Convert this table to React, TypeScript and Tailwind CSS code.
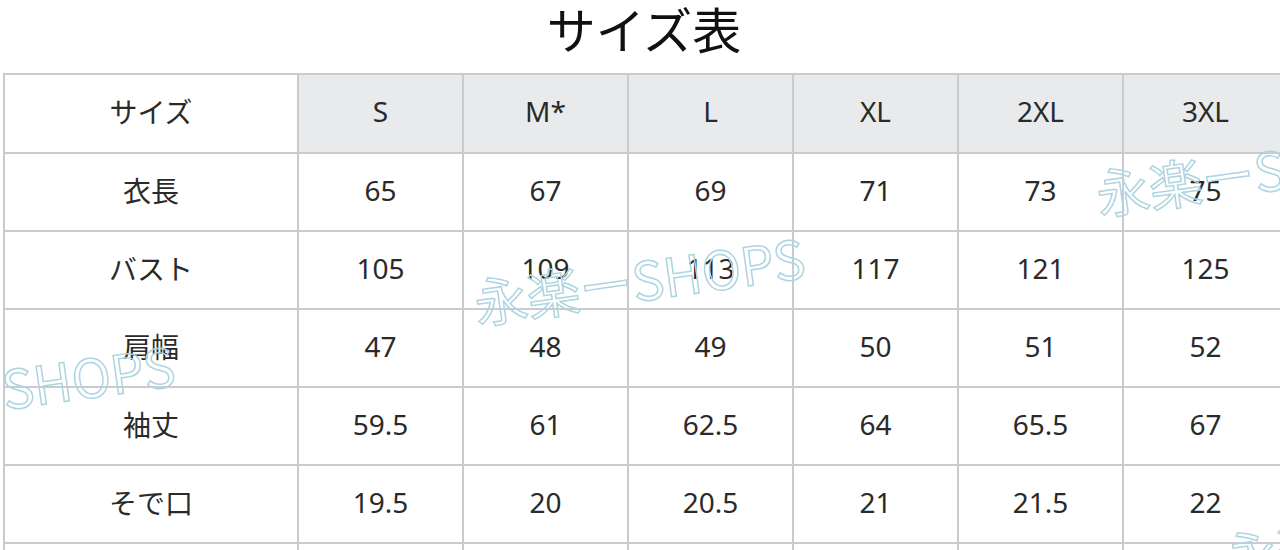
import React from "react";

const sizes = ["S", "M*", "L", "XL", "2XL", "3XL"];

const rows: { label: string; values: string[] }[] = [
  { label: "衣長", values: ["65", "67", "69", "71", "73", "75"] },
  { label: "バスト", values: ["105", "109", "113", "117", "121", "125"] },
  { label: "肩幅", values: ["47", "48", "49", "50", "51", "52"] },
  { label: "袖丈", values: ["59.5", "61", "62.5", "64", "65.5", "67"] },
  { label: "そで口", values: ["19.5", "20", "20.5", "21", "21.5", "22"] },
  { label: "", values: ["", "", "", "", "", ""] },
];

const font = "font-['Noto_Sans','Noto_Sans_CJK_JP',sans-serif]";
const cell =
  "flex items-center justify-center pb-[5px] border-r-2 border-b-2 border-[#cbcbcd] text-[28px] text-[#2a2a2a]";

function Watermark({ text, className }: { text: string; className: string }) {
  return (
    <div
      className={`absolute whitespace-nowrap origin-bottom-left -rotate-[8deg] text-[53px] leading-none text-transparent [-webkit-text-stroke:1.5px_#add4e1] font-['Noto_Sans_CJK_JP',sans-serif] pointer-events-none ${className}`}
    >
      {text}
    </div>
  );
}

export default function App() {
  return (
    <div className={`relative w-[1280px] h-[550px] overflow-hidden bg-white ${font}`}>
      <div className="h-[73px] flex justify-center pt-[1px]">
        <h1 className="ml-[8px] text-[49px] leading-[1.1] font-normal text-[#111] font-['Noto_Sans_CJK_JP',sans-serif]">
          サイズ表
        </h1>
      </div>
      <div className="ml-[3px] w-[1290px] grid grid-cols-[294px_repeat(6,165px)] border-l-2 border-t-2 border-[#cbcbcd]">
        <div className={`${cell} h-[79px] bg-white font-['Noto_Sans_CJK_JP',sans-serif]`}>サイズ</div>
        {sizes.map((s) => (
          <div key={s} className={`${cell} h-[79px] bg-[#e9eaec]`}>
            {s}
          </div>
        ))}
        {rows.map((r, i) => (
          <React.Fragment key={i}>
            <div className={`${cell} h-[78px] font-['Noto_Sans_CJK_JP',sans-serif]`}>{r.label}</div>
            {r.values.map((v, j) => (
              <div key={j} className={`${cell} h-[78px]`}>
                {v}
              </div>
            ))}
          </React.Fragment>
        ))}
      </div>

      <Watermark text="永楽ーSHOPS" className="left-[478px] top-[275px]" />
      <Watermark text="永楽ーSHOPS" className="left-[1100px] top-[166px]" />
      <Watermark text="永楽ーSHOPS" className="left-[-152px] top-[383px]" />
      <Watermark text="永楽ーSHOPS" className="left-[1228px] top-[530px]" />
      <Watermark text="永楽ーSHOPS" className="left-[-300px] top-[-28px]" />
    </div>
  );
}
